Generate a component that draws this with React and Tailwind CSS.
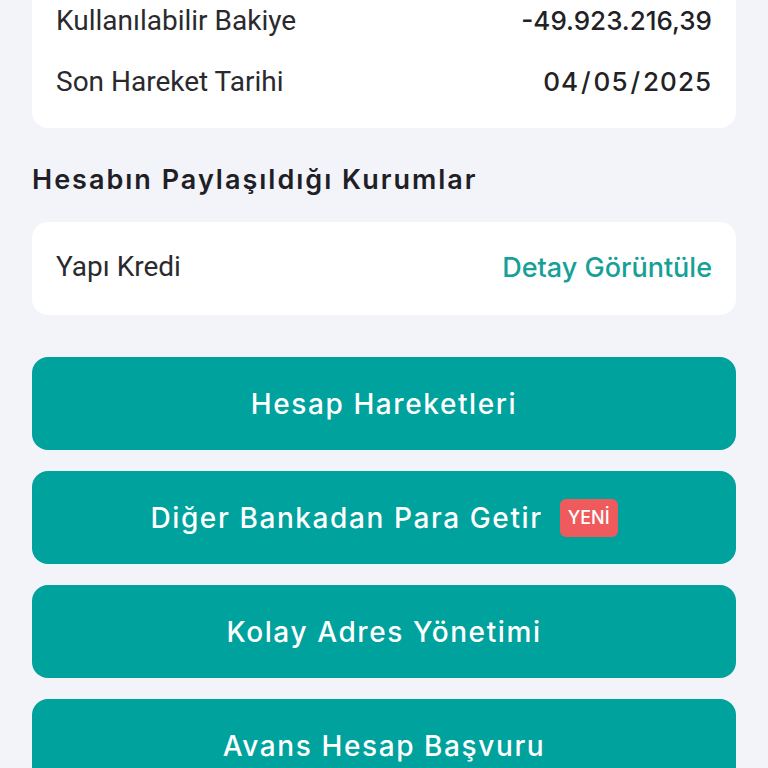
export default function App() {
  const roboto = { fontFamily: 'Roboto, "Noto Sans", sans-serif' };
  const inter = { fontFamily: 'Inter, "Noto Sans", sans-serif' };
  const btn = "flex h-[93px] items-center justify-center rounded-[16px] bg-[#00a29d] text-[28px] font-medium tracking-[1.6px] text-white";
  return (
    <div className="min-h-[768px] overflow-hidden bg-[#f2f4f9] px-8" style={roboto}>
      <div className="-mt-[10px] rounded-b-[16px] bg-white px-6 pb-4">
        <div className="flex h-[61px] items-center justify-between">
          <span className="text-[28px] text-[#2a2a2e]">Kullanılabilir Bakiye</span>
          <span className="text-[26px] font-medium text-[#222226]" style={inter}>-49.923.216,39</span>
        </div>
        <div className="flex h-[61px] items-center justify-between">
          <span className="text-[28px] text-[#2a2a2e]">Son Hareket Tarihi</span>
          <span className="text-[26px] font-medium tracking-[1px] text-[#222226]" style={inter}>
            04<span className="mx-[2px]">/</span>05<span className="mx-[2px]">/</span>2025
          </span>
        </div>
      </div>
      <h2 className="mt-[31px] text-[27px] font-semibold leading-[42px] tracking-[2px] text-[#1f2026]" style={inter}>Hesabın Paylaşıldığı Kurumlar</h2>
      <div className="mt-[21px] flex h-[93px] items-center justify-between rounded-[16px] bg-white px-6">
        <span className="-mt-[4px] text-[28px] text-[#2a2a2e]">Yapı Kredi</span>
        <span className="text-[27px] font-medium text-[#16a097]" style={inter}>Detay Görüntüle</span>
      </div>
      <div className="mt-[42px] flex flex-col gap-[21px]" style={inter}>
        <div className={btn}>Hesap Hareketleri</div>
        <div className={btn}>
          <span>Diğer Bankadan Para Getir</span>
          <span className="ml-[17px] flex h-[38px] items-center rounded-[6px] bg-[#ef5b5d] px-[8px] text-[18px] font-medium tracking-normal text-white">YENİ</span>
        </div>
        <div className={btn}>Kolay Adres Yönetimi</div>
        <div className={btn}>Avans Hesap Başvuru</div>
      </div>
    </div>
  );
}
